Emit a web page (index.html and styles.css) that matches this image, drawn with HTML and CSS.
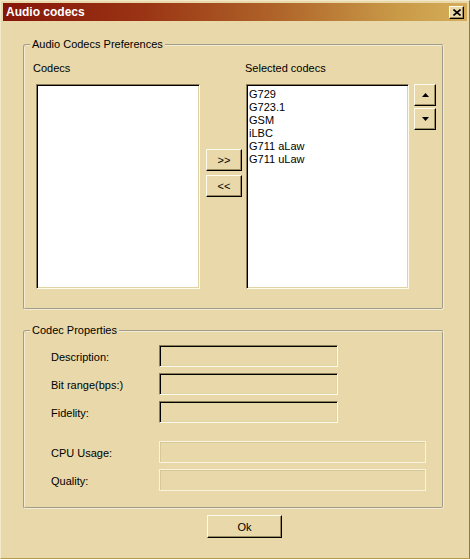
FILE: index.html
```html
<!DOCTYPE html>
<html lang="en">
<head>
  <meta charset="UTF-8" />
  <title>Audio codecs</title>
  <link rel="stylesheet" href="styles.css">
</head>
<body>
  <div class="window">
    <div class="titlebar">
      <span class="title">Audio codecs</span>
      <button class="close-btn" aria-label="Close">
        <svg width="8" height="7" viewBox="0 0 8 7"><path d="M0.5 0.5 L7.5 6.5 M7.5 0.5 L0.5 6.5" stroke="#000" stroke-width="1.6" fill="none"/></svg>
      </button>
    </div>

    <div class="dialog">
      <fieldset class="group">
        <legend>Audio Codecs Preferences</legend>
        <div class="group-body prefs">
          <div class="caption col-1">Codecs</div>
          <div class="caption col-3">Selected codecs</div>

          <div class="listbox col-1"></div>
          <div class="move-btns col-2">
            <button class="btn move">&gt;&gt;</button>
            <button class="btn move">&lt;&lt;</button>
          </div>
          <div class="listbox col-3">
            <div class="item">G729</div>
            <div class="item">G723.1</div>
            <div class="item">GSM</div>
            <div class="item">iLBC</div>
            <div class="item">G711 aLaw</div>
            <div class="item">G711 uLaw</div>
          </div>
          <div class="order-btns col-4">
            <button class="btn arrow" aria-label="Move up">
              <svg width="7" height="4" viewBox="0 0 7 4"><path d="M3.5 0 L7 4 L0 4 Z" fill="#000"/></svg>
            </button>
            <button class="btn arrow" aria-label="Move down">
              <svg width="7" height="4" viewBox="0 0 7 4"><path d="M0 0 L7 0 L3.5 4 Z" fill="#000"/></svg>
            </button>
          </div>
        </div>
      </fieldset>

      <fieldset class="group props-group">
        <legend>Codec Properties</legend>
        <div class="group-body props">
          <label class="prop-label row-1">Description:</label>
          <div class="field short row-1"></div>
          <label class="prop-label row-2">Bit range(bps:)</label>
          <div class="field short row-2"></div>
          <label class="prop-label row-3">Fidelity:</label>
          <div class="field short row-3"></div>

          <label class="prop-label row-5">CPU Usage:</label>
          <div class="field wide disabled row-5"></div>
          <label class="prop-label row-6">Quality:</label>
          <div class="field wide disabled row-6"></div>
        </div>
      </fieldset>

      <div class="actions">
        <button class="btn ok-btn">Ok</button>
      </div>
    </div>
  </div>
</body>
</html>
```

FILE: styles.css
```css
body {
  margin: 0;
  font-family: "Liberation Sans", Arial, sans-serif;
  font-size: 11px;
  color: #000;
  background: #e8d8aa;
}
.window {
  width: 470px;
  height: 559px;
  box-sizing: border-box;
  background: #e8d8aa;
  border: 1px solid;
  border-color: #f3e9c8 #8c7a46 #b89a48 #f3e9c8;
  padding: 2px;
}
.titlebar {
  height: 18px;
  display: flex;
  align-items: center;
  justify-content: space-between;
  padding: 0 3px 0 3px;
  background: linear-gradient(to right, #861509 0%, #9a3414 30%, #b0662a 60%, #c99a48 85%, #d5ad5a 100%);
}
.title {
  color: #fff;
  font-weight: bold;
  font-size: 12px;
}
.close-btn {
  width: 15px;
  height: 13px;
  padding: 0;
  display: flex;
  align-items: center;
  justify-content: center;
  background: #e8d8aa;
  border: 1px solid;
  border-color: #fffbea #000 #000 #fffbea;
  box-shadow: inset -1px -1px 0 #9a8c60;
}
.dialog {
  padding: 17px 23px 0 20px;
}
.group {
  margin: 0;
  padding: 0;
  min-width: 0;
  border: 2px groove #f4ecd2;
  border-radius: 3px;
}
.group legend {
  margin-left: 5px;
  padding: 0 2px;
  line-height: 13px;
}
.prefs {
  display: grid;
  grid-template-columns: 164px 36px 163px 22px;
  column-gap: 5px;
  grid-template-rows: 13px 205px;
  row-gap: 9px;
  padding: 11px 0 19px 11px;
}
.col-1 { grid-column: 1; }
.col-2 { grid-column: 2; }
.col-3 { grid-column: 3; }
.col-4 { grid-column: 4; }
.caption {
  line-height: 13px;
  margin-left: -3px;
}
.caption.col-3 {
  margin-left: -1px;
}
.listbox {
  grid-row: 2;
  background: #fff;
  border: 1px solid;
  border-color: #8a7d57 #fffbea #fffbea #8a7d57;
  box-shadow: inset 1px 1px 0 #000, inset -1px -1px 0 #e0d3a6;
  padding: 3px 2px;
}
.item {
  line-height: 13px;
}
.move-btns {
  grid-row: 2;
  display: flex;
  flex-direction: column;
  gap: 4px;
  padding-top: 65px;
  margin-left: 1px;
}
.order-btns {
  grid-row: 2;
  display: flex;
  flex-direction: column;
  gap: 2px;
}
.btn {
  font-family: inherit;
  font-size: 11px;
  color: #000;
  background: #e8d8aa;
  border: 1px solid;
  border-color: #fffbea #000 #000 #fffbea;
  box-shadow: inset -1px -1px 0 #9a8c60;
  padding: 0;
  display: flex;
  align-items: center;
  justify-content: center;
}
.move {
  width: 36px;
  height: 22px;
}
.arrow {
  width: 22px;
  height: 22px;
}
.props-group {
  margin-top: 14px;
}
.props {
  display: grid;
  grid-template-columns: 108px auto;
  grid-template-rows: 22px 22px 22px 6px 22px 22px;
  row-gap: 6px;
  align-items: center;
  padding: 8px 0 16px 26px;
}
.row-1 { grid-row: 1; }
.row-2 { grid-row: 2; }
.row-3 { grid-row: 3; }
.row-5 { grid-row: 5; }
.row-6 { grid-row: 6; }
.prop-label {
  grid-column: 1;
  padding-top: 3px;
  line-height: 13px;
}
.field {
  grid-column: 2;
  height: 22px;
  box-sizing: border-box;
  border: 1px solid;
  border-color: #8a7d57 #fffbea #fffbea #8a7d57;
  box-shadow: inset 1px 1px 0 #000, inset -1px -1px 0 #e0d3a6;
}
.field.short {
  width: 179px;
}
.field.wide {
  width: 267px;
}
.field.disabled {
  border-color: #fbf4dc;
  box-shadow: inset 1px 1px 0 #d7c899;
}
.actions {
  display: flex;
  padding: 6px 0 0 184px;
}
.ok-btn {
  width: 75px;
  height: 23px;
}
```
